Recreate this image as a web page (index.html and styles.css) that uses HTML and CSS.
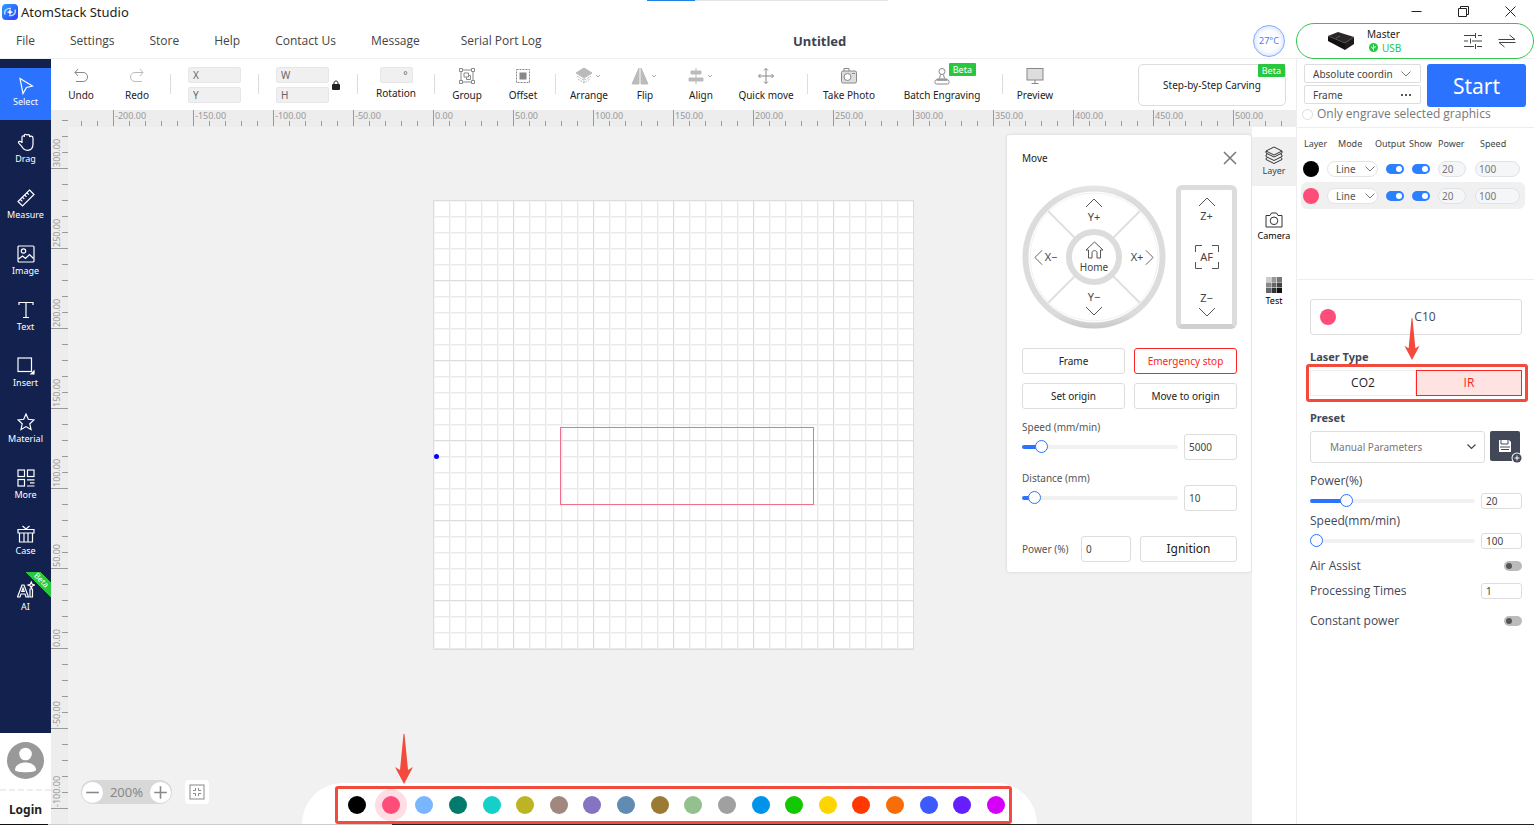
FILE: index.html
```html
<!DOCTYPE html>
<html lang="en">
<head>
  <meta charset="UTF-8" />
  <meta name="viewport" content="width=device-width, initial-scale=1.0"/>
  <title>AtomStack Studio</title>
  <link rel="stylesheet" href="styles.css">
</head>
<body>
  <div class="load-bar"></div>

  <header class="titlebar">
    <svg class="logo" viewBox="0 0 16 16">
      <defs><linearGradient id="logoFill" x1="0" y1="0" x2="1" y2="1"><stop offset="0" stop-color="#2fa0ff"/><stop offset="1" stop-color="#2a3cff"/></linearGradient></defs>
      <rect width="16" height="16" rx="4" fill="url(#logoFill)"/>
      <path d="M3 10.500C1.500 7 5 3.500 9 4.500M13 5.500C14.500 9 11 12.500 7 11.500" fill="none" stroke="#bfe0ff" stroke-width="1.300"/>
      <path d="M8 4.800L9 7.200L11.200 8L9 8.900L8 11.200L7 8.900L4.800 8L7 7.200Z" fill="#fff"/>
    </svg>
    <span class="app-name">AtomStack Studio</span>
    <div class="window-buttons">
      <button aria-label="Minimize"><svg width="11" height="11" viewBox="0 0 11 11"><path d="M0.500 5.500H10.500"/></svg></button>
      <button aria-label="Restore"><svg width="11" height="11" viewBox="0 0 11 11"><path d="M0.500 2.500H8.500V10.500H0.500ZM2.500 2.500V0.500H10.500V8.500H8.500"/></svg></button>
      <button aria-label="Close"><svg width="11" height="11" viewBox="0 0 11 11"><path d="M0.500 0.500L10.500 10.500M10.500 0.500L0.500 10.500"/></svg></button>
    </div>
  </header>

  <div class="menubar">
    <nav class="menu">
      <a href="#">File</a>
      <a href="#">Settings</a>
      <a href="#">Store</a>
      <a href="#">Help</a>
      <a href="#">Contact Us</a>
      <a href="#">Message</a>
      <a href="#" class="port-log">Serial Port Log</a>
    </nav>
    <h1 class="doc-title">Untitled</h1>
    <span class="temp">27°C</span>
    <div class="device">
      <svg class="device-pic" width="28" height="20" viewBox="0 0 28 20">
        <path d="M1 5L11 1L27 6L18 12Z" fill="#2b2727"/>
        <path d="M1 5L18 12V19L1 10Z" fill="#111"/>
        <path d="M18 12L27 6V13L18 19Z" fill="#1c1a1a"/>
        <path d="M1 5L18 12L27 6" fill="none" stroke="#5a5250" stroke-width="0.600"/>
        <path d="M9 7L13 5" stroke="#777" stroke-width="0.600"/>
      </svg>
      <div class="device-info">
        <span>Master</span>
        <span class="usb"><svg width="9" height="9" viewBox="0 0 9 9"><circle cx="4.500" cy="4.500" r="4.500" fill="#22c840"/><path d="M4.500 1.500V7.500M2.700 3.500V4.700L4.500 5.800M6.300 3V4.200L4.500 5.200" fill="none" stroke="#fff" stroke-width="0.800"/></svg>USB</span>
      </div>
      <button aria-label="Device settings"><svg width="18" height="16" viewBox="0 0 18 16"><path d="M0 2.500H11M14 2.500H18M11.500 0V5M0 8H4M8 8H18M6.500 5.500V10.500M0 13.500H10M13 13.500H18M11.500 11V16"/></svg></button>
      <button aria-label="Switch device"><svg width="18" height="14" viewBox="0 0 18 14"><path d="M0.500 5.500H17L11.500 1M17.500 8.500H1L6.500 13"/></svg></button>
    </div>
  </div>

  <div class="workspace">
    <aside class="sidebar">
      <div class="tools">
        <button class="side-tool active"><svg viewBox="0 0 18 18"><path d="M3 1.500L15.500 9L9.500 10.500L6 16.500Z"/></svg>Select</button>
        <button class="side-tool"><svg viewBox="0 0 18 18"><path d="M5 10V4C5 2.300 7.300 2.300 7.300 4V2.500C7.300 0.800 10 0.800 10 2.500C10 1.200 12.600 1.200 12.600 3V4C13 2.600 16 2.800 16 5V11C16 15 14 17.300 10.500 17.300C7 17.300 5.500 15 4.500 13L1.500 9.800C1 8.300 3 7.500 5 9.500"/></svg>Drag</button>
        <button class="side-tool"><svg viewBox="0 0 18 18"><path d="M12.500 1L17 5.500L5.500 17L1 12.500ZM3.500 10.500L5.300 12.300M5.500 8.300L7.300 10.100M7.700 6L9.500 7.800M10 3.800L11.800 5.600"/></svg>Measure</button>
        <button class="side-tool"><svg viewBox="0 0 18 18"><rect x="1" y="1" width="16" height="16" rx="1"/><circle cx="6.500" cy="6" r="2.200"/><path d="M1.500 14L5.500 11L8.500 13.500L12.500 9.500L16.500 13.500"/></svg>Image</button>
        <button class="side-tool"><svg viewBox="0 0 18 18"><path d="M2 4V1.500H16V4M9 1.500V16.500M6 16.500H12"/></svg>Text</button>
        <button class="side-tool"><svg viewBox="0 0 18 18"><rect x="1" y="1" width="13.500" height="13.500"/><path d="M17 14V17H14Z" fill="#fff"/></svg>Insert</button>
        <button class="side-tool"><svg viewBox="0 0 18 18"><path d="M9 1L11.300 6.300L17 6.900L12.800 10.800L14 16.500L9 13.600L4 16.500L5.200 10.800L1 6.900L6.700 6.300Z"/></svg>Material</button>
        <button class="side-tool"><svg viewBox="0 0 18 18"><rect x="1" y="1" width="6.500" height="6.500"/><rect x="10.500" y="1" width="6.500" height="6.500"/><rect x="1" y="10.500" width="6.500" height="6.500"/><path d="M10 10.800H17.500M13 13.800H17.500M10 17H17.500"/></svg>More</button>
        <button class="side-tool"><svg viewBox="0 0 18 18"><path d="M1 4.500H17V8H1ZM2.500 8V17H15.500V8M7 8V17M11 8V17M5.500 1L9 4L12.500 1"/></svg>Case</button>
        <button class="side-tool ai"><svg viewBox="0 0 18 18"><path d="M0.500 16L5 4H7L11.500 16H9L8 13H4L3 16ZM4.800 10.500H7.200L6 7ZM13 8H15.500V16H13ZM14.300 1L15.200 3.200L17.500 4L15.200 5L14.300 7L13.300 5L11 4L13.300 3.200Z"/></svg>AI<span class="ribbon"><span>Beta</span></span></button>
      </div>
      <div class="account">
        <svg width="37" height="37" viewBox="0 0 37 37"><circle cx="18.500" cy="18.500" r="18.500" fill="#999"/><circle cx="18.500" cy="12" r="6.300" fill="#fff"/><path d="M8 28C8 18 29 18 29 28C29 31 8 31 8 28Z" fill="#fff"/></svg>
        <a href="#">Login</a>
      </div>
    </aside>

    <main class="center">
      <div class="toolbar">
        <div class="group history">
          <button class="tool"><svg viewBox="0 0 18 18"><path d="M6 2L3 5.500L6 9M3 5.500H11C17 5.500 17 14.500 11 14.500H4"/></svg>Undo</button>
          <button class="tool faded"><svg viewBox="0 0 18 18"><path d="M12 2L15 5.500L12 9M15 5.500H7C1 5.500 1 14.500 7 14.500H14"/></svg>Redo</button>
        </div>
        <div class="group fields">
          <div class="field-stack"><input aria-label="X" value="X"><input aria-label="Y" value="Y"></div>
        </div>
        <div class="group fields">
          <div class="field-stack"><input aria-label="W" value="W"><input aria-label="H" value="H"></div>
          <svg class="lock" width="8" height="10" viewBox="0 0 8 10"><rect y="4" width="8" height="6" rx="1" fill="#222"/><path d="M2 4V3C2 0.300 6 0.300 6 3V4" fill="none" stroke="#222"/></svg>
        </div>
        <div class="group fields">
          <label class="rotation"><input value="°">Rotation</label>
        </div>
        <div class="group">
          <button class="tool"><svg viewBox="0 0 18 18"><path d="M4 3H14M4 15H14M3 4V14M15 4V14M1.500 1.500H4.500V4.500H1.500ZM13.500 1.500H16.500V4.500H13.500ZM1.500 13.500H4.500V16.500H1.500ZM13.500 13.500H16.500V16.500H13.500ZM6 6H10.500V10H6ZM8.500 10V12.500H12.500V8.500H10.500"/></svg>Group</button>
          <button class="tool"><svg viewBox="0 0 18 18"><rect x="2.500" y="2.500" width="13" height="13" stroke-dasharray="2 1"/><rect x="6" y="6" width="6" height="6" fill="#888"/></svg>Offset</button>
        </div>
        <div class="group arrange">
          <button class="tool drop"><svg viewBox="0 0 28 18"><path d="M9 1L17 6L9 11L1 6Z" fill="#bbb" stroke="#bbb"/><path d="M2 9L9 13.500L16 9M3 12L9 16L15 12M9 11V17" stroke="#bbb" stroke-dasharray="2 1"/><path d="M21 8L23 10L25 8" stroke="#aaa"/></svg>Arrange</button>
          <button class="tool drop"><svg viewBox="0 0 28 18"><path d="M8 1V17H1ZM10 1V17H17Z" fill="#bbb" stroke="#bbb"/><path d="M21 8L23 10L25 8" stroke="#aaa"/></svg>Flip</button>
          <button class="tool drop"><svg viewBox="0 0 28 18"><path d="M4 4H14V7H4ZM2 11H16V14H2Z" fill="#bbb" stroke="#bbb"/><path d="M9 1V17" stroke="#bbb"/><path d="M21 8L23 10L25 8" stroke="#aaa"/></svg>Align</button>
          <button class="tool wide"><svg viewBox="0 0 18 18"><path d="M9 1.500V16.500M1.500 9H16.500M7 3.500L9 1.500L11 3.500M7 14.500L9 16.500L11 14.500M3.500 7L1.500 9L3.500 11M14.500 7L16.500 9L14.500 11"/></svg>Quick move</button>
        </div>
        <div class="group">
          <button class="tool wide"><svg viewBox="0 0 18 18"><rect x="1.500" y="4" width="15" height="12" rx="1.500" fill="#ddd"/><path d="M4 4V1.500H9V4M12 6.500H15"/><circle cx="7.500" cy="10" r="3.500" fill="#fff"/></svg>Take Photo</button>
          <button class="tool batch"><svg viewBox="0 0 18 18"><circle cx="9" cy="4.500" r="3"/><path d="M7.500 7.500L6.500 11.500M10.500 7.500L11.500 11.500M4 12H14V13H4Z"/><rect x="2" y="13" width="14" height="4" rx="1.500"/></svg>Batch Engraving<span class="beta">Beta</span></button>
        </div>
        <div class="group last">
          <button class="tool"><svg viewBox="0 0 18 18"><rect x="1" y="1.500" width="16" height="11.500" fill="#ddd"/><path d="M9 13V16.500M5.500 16.500H12.500"/></svg>Preview</button>
        </div>
        <button class="step">Step-by-Step Carving<span class="beta">Beta</span></button>
      </div>

      <div class="board">
        <div class="ruler-x" id="rulerX"></div>
        <div class="ruler-y" id="rulerY"></div>

        <div class="stage">
          <div class="bed">
            <div class="shape"></div>
            <div class="laser-dot"></div>
          </div>

          <div class="zoom-bar">
            <div class="zoom">
              <button aria-label="Zoom out"><svg viewBox="0 0 20 20"><path d="M4 10H16"/></svg></button>
              <span>200%</span>
              <button aria-label="Zoom in"><svg viewBox="0 0 20 20"><path d="M4 10H16M10 4V16"/></svg></button>
            </div>
            <button class="fit" aria-label="Fit to screen"><svg viewBox="0 0 16 16"><rect x="1" y="1" width="14" height="14"/><path d="M4 6.500H6.500V4M12 6.500H9.500V4M4 9.500H6.500V12M12 9.500H9.500V12"/></svg></button>
          </div>

          <section class="move-panel">
            <div class="move-head">
              <h2>Move</h2>
              <button aria-label="Close panel"><svg width="14" height="14" viewBox="0 0 14 14"><path d="M1 1L13 13M13 1L1 13" stroke="#777" stroke-width="1.500"/></svg></button>
            </div>
            <div class="jog-row">
              <div class="jog">
                <svg class="jog-bg" viewBox="0 0 144 144">
                  <defs><linearGradient id="rim" x1="0" y1="0" x2="0" y2="1"><stop offset="0" stop-color="#e6e6e6"/><stop offset="0.100" stop-color="#dcdcdc"/><stop offset="0.900" stop-color="#dcdcdc"/><stop offset="1" stop-color="#c8c8c8"/></linearGradient></defs>
                  <circle cx="72" cy="72" r="71.500" fill="url(#rim)"/>
                  <circle cx="72" cy="72" r="65.500" fill="#fff"/>
                  <circle cx="72" cy="72" r="64" fill="none" stroke="#f1f1f1"/>
                  <path d="M26 26L118 118M118 26L26 118" stroke="#e0e0e0" stroke-width="2"/>
                  <circle cx="72" cy="72" r="25" fill="#fff" stroke="#dcdcdc" stroke-width="6"/>
                </svg>
                <button class="y-plus"><svg class="chev" viewBox="0 0 18 10"><path d="M1 9L9 1L17 9"/></svg>Y+</button>
                <button class="x-minus"><svg class="chev-side" viewBox="0 0 10 18"><path d="M9 1L1 9L9 17"/></svg>X−</button>
                <button class="home"><svg width="19" height="18" viewBox="0 0 19 18"><path d="M1 9L9.500 1L18 9H15.500V17H12V11.500C12 9 7 9 7 11.500V17H3.500V9Z"/></svg>Home</button>
                <button class="x-plus">X+<svg class="chev-side" viewBox="0 0 10 18"><path d="M1 1L9 9L1 17"/></svg></button>
                <button class="y-minus">Y−<svg class="chev" viewBox="0 0 18 10"><path d="M1 1L9 9L17 1"/></svg></button>
              </div>
              <div class="z-pad">
                <button><svg class="chev" viewBox="0 0 18 10"><path d="M1 9L9 1L17 9"/></svg>Z+</button>
                <button class="af">AF<svg viewBox="0 0 24 24"><path d="M0.500 7V0.500H7M17 0.500H23.500V7M23.500 17V23.500H17M7 23.500H0.500V17"/></svg></button>
                <button>Z−<svg class="chev" viewBox="0 0 18 10"><path d="M1 1L9 9L17 1"/></svg></button>
              </div>
            </div>
            <div class="move-buttons">
              <button class="btn">Frame</button>
              <button class="btn danger">Emergency stop</button>
              <button class="btn">Set origin</button>
              <button class="btn">Move to origin</button>
            </div>
            <div class="move-slider">
              <label for="moveSpeed">Speed (mm/min)</label>
              <input type="range" id="moveSpeed" value="9" style="--fill: 13%">
              <input class="box" aria-label="Speed value" value="5000">
            </div>
            <div class="move-slider">
              <label for="moveDistance">Distance (mm)</label>
              <input type="range" id="moveDistance" value="4" style="--fill: 8%">
              <input class="box" aria-label="Distance value" value="10">
            </div>
            <div class="ignite">
              <label for="movePower">Power (%)</label>
              <input class="box" id="movePower" value="0">
              <button class="btn big">Ignition</button>
            </div>
          </section>

          <div class="palette">
            <svg class="arrow" width="18" height="50" viewBox="0 0 18 50"><path d="M8.500 0H9.500L13 36L18 33L9 50L0 33L5 36Z" fill="#f24a3d"/></svg>
            <div class="swatches" id="swatches"></div>
          </div>
        </div>

        <nav class="tabs">
          <button class="tab active"><svg viewBox="0 0 18 18"><path d="M9 1L17 5L9 9L1 5ZM1 5V7L9 11L17 7V5M2.500 8L1 9V10.500L9 14.500L17 10.500V9L15.500 8M2.500 11.500L1 12.500V13.500L9 17.500L17 13.500V12.500L15.500 11.500"/></svg>Layer</button>
          <button class="tab"><svg viewBox="0 0 18 18"><path d="M1 4.500H5L6.500 2H11.500L13 4.500H17V16H1Z"/><circle cx="9" cy="9.800" r="3.800"/></svg>Camera</button>
          <button class="tab"><svg viewBox="0 0 18 18" class="test-icon"><path fill="#ccc" d="M1 1H6V6H1Z"/><path fill="#999" d="M6.500 1H11.500V6H6.500Z"/><path fill="#777" d="M12 1H17V6H12Z"/><path fill="#888" d="M1 6.500H6V11.500H1Z"/><path fill="#666" d="M6.500 6.500H11.500V11.500H6.500Z"/><path fill="#444" d="M12 6.500H17V11.500H12Z"/><path fill="#666" d="M1 12H6V17H1Z"/><path fill="#333" d="M6.500 12H11.500V17H6.500Z"/><path fill="#111" d="M12 12H17V17H12Z"/></svg>Test</button>
        </nav>
      </div>
    </main>

    <aside class="panel">
      <section class="run">
        <div class="run-left">
          <div class="select">
            <select aria-label="Coordinates"><option>Absolute coordin</option></select>
            <svg width="10" height="6" viewBox="0 0 10 6"><path d="M0.500 0.500L5 5L9.500 0.500"/></svg>
          </div>
          <button class="frame-btn">Frame<svg width="10" height="2" viewBox="0 0 10 2"><path d="M0 0H2V2H0ZM4 0H6V2H4ZM8 0H10V2H8Z" fill="#555"/></svg></button>
        </div>
        <button class="start">Start</button>
        <label class="only"><input type="radio">Only engrave selected graphics</label>
      </section>

      <section class="layers">
        <table>
          <thead>
            <tr><th class="c-layer">Layer</th><th class="c-mode">Mode</th><th class="c-output">Output</th><th class="c-show">Show</th><th class="c-power">Power</th><th class="c-speed">Speed</th></tr>
          </thead>
          <tbody>
            <tr>
              <td><span class="dot black"></span></td>
              <td><div class="select pill"><select aria-label="Mode, layer 1"><option>Line</option></select><svg width="10" height="6" viewBox="0 0 10 6"><path d="M0.500 0.500L5 5L9.500 0.500"/></svg></div></td>
              <td class="c-output"><input type="checkbox" class="switch" aria-label="Output, layer 1" checked></td>
              <td class="c-show"><input type="checkbox" class="switch" aria-label="Show, layer 1" checked></td>
              <td><input class="num" aria-label="Power, layer 1" value="20"></td>
              <td><input class="num long" aria-label="Speed, layer 1" value="100"></td>
            </tr>
            <tr class="current">
              <td><span class="dot pink"></span></td>
              <td><div class="select pill"><select aria-label="Mode, layer 2"><option>Line</option></select><svg width="10" height="6" viewBox="0 0 10 6"><path d="M0.500 0.500L5 5L9.500 0.500"/></svg></div></td>
              <td class="c-output"><input type="checkbox" class="switch" aria-label="Output, layer 2" checked></td>
              <td class="c-show"><input type="checkbox" class="switch" aria-label="Show, layer 2" checked></td>
              <td><input class="num" aria-label="Power, layer 2" value="20"></td>
              <td><input class="num long" aria-label="Speed, layer 2" value="100"></td>
            </tr>
          </tbody>
        </table>
      </section>

      <section class="params">
        <button class="layer-name"><span class="dot pink"></span><span>C10</span></button>
        <div class="laser">
          <h3>Laser Type</h3>
          <svg class="arrow" width="16" height="42" viewBox="0 0 18 50"><path d="M8.500 0H9.500L13 36L18 33L9 50L0 33L5 36Z" fill="#f24a3d"/></svg>
          <div class="laser-types">
            <button>CO2</button>
            <button class="on">IR</button>
          </div>
        </div>
        <h3>Preset</h3>
        <div class="preset">
          <div class="select">
            <select aria-label="Preset"><option>Manual Parameters</option></select>
            <svg width="9" height="6" viewBox="0 0 9 6"><path d="M0.500 0.500L4.500 4.500L8.500 0.500" stroke="#444" stroke-width="1.200"/></svg>
          </div>
          <button class="save" aria-label="Save preset">
            <svg width="32" height="32" viewBox="0 0 32 32"><rect width="30" height="30" rx="2" fill="#434859"/><path d="M9 9H19L21 11V21H9Z" fill="#fff"/><path d="M11 9V13H18V9M10 16H20M11 18.500H19" fill="none" stroke="#434859"/><circle cx="27" cy="27" r="5.500" fill="#fff"/><circle cx="27" cy="27" r="4.500" fill="#434859"/><path d="M27 24.500V29.500M24.500 27H29.500" stroke="#fff"/></svg>
          </button>
        </div>
        <div class="param">
          <label for="power">Power(%)</label>
          <input type="range" id="power" value="20" style="--fill: 22%">
          <input class="box" aria-label="Power value" value="20">
        </div>
        <div class="param">
          <label for="speed">Speed(mm/min)</label>
          <input type="range" id="speed" value="0" style="--fill: 0%">
          <input class="box" aria-label="Speed value" value="100">
        </div>
        <div class="line"><label for="air">Air Assist</label><input type="checkbox" id="air" class="switch off"></div>
        <div class="line"><label for="times">Processing Times</label><input id="times" class="box" value="1"></div>
        <div class="line last"><label for="constant">Constant power</label><input type="checkbox" id="constant" class="switch off"></div>
      </section>
    </aside>
  </div>
  <div class="bottom-edge"></div>

  <script>
    const rulerX = document.getElementById("rulerX");
    const rulerY = document.getElementById("rulerY");
    const swatches = document.getElementById("swatches");

    const colors = [
      "#000000", "#ff4d79", "#7ab5ff", "#047a6c", "#14d0c8", "#bcb325", "#a1887f",
      "#8673c1", "#5f8cb0", "#9b7b33", "#93c08d", "#a0a0a0", "#0093ec", "#14c800",
      "#ffd500", "#ff3800", "#f76e08", "#3d5afe", "#651fff", "#d500f9"
    ];

    function addMarks(ruler, from, to, step) {
      for (let v = from; step > 0 ? v <= to : v >= to; v += step) {
        const mark = document.createElement("span");
        mark.className = "mark";
        mark.textContent = v.toFixed(2);
        ruler.appendChild(mark);
      }
    }

    addMarks(rulerX, -200, 500, 50);
    addMarks(rulerY, 300, -100, -50);

    colors.forEach((color, i) => {
      const swatch = document.createElement("button");
      swatch.className = i === 1 ? "swatch picked" : "swatch";
      swatch.style.background = color;
      swatch.setAttribute("aria-label", "Color " + (i + 1));
      swatches.appendChild(swatch);
    });
  </script>
</body>
</html>
```
FILE: styles.css
```css
* {
  box-sizing: border-box;
}

body {
  margin: 0;
  height: 100vh;
  display: flex;
  flex-direction: column;
  overflow: hidden;
  background: #fff;
  color: #222;
  font-family: "Noto Sans", "Open Sans", sans-serif;
  font-size: 10px;
  line-height: 14px;
}

button, input, select {
  font: inherit;
  color: inherit;
  margin: 0;
  padding: 0;
  border: none;
  background: none;
}

a {
  color: inherit;
  text-decoration: none;
}

h1, h2, h3 {
  margin: 0;
}

svg {
  flex-shrink: 0;
  fill: none;
  stroke-width: 1;
}

.load-bar {
  position: absolute;
  top: 0;
  left: 647px;
  width: 241px;
  height: 1px;
  background: linear-gradient(to right, #1c82e0 48px, #e4e4e4 48px);
}

/* title bar */
.titlebar {
  height: 23px;
  display: flex;
  align-items: center;
  padding: 0 18px 0 2px;
}

.logo {
  width: 16px;
  height: 16px;
}

.app-name {
  margin-left: 3px;
  font-size: 13px;
}

.window-buttons {
  margin-left: auto;
  display: flex;
  gap: 36px;
}

.window-buttons button {
  display: flex;
}

.window-buttons svg {
  stroke: #222;
}

/* menu bar */
.menubar {
  height: 36px;
  display: flex;
  align-items: center;
  border-bottom: 1px solid #f0f0f0;
}

.menu {
  flex: 0 0 793px;
  display: flex;
  gap: 35px;
  padding-left: 16px;
  font-family: "Open Sans", sans-serif;
  font-size: 12px;
  line-height: 16px;
  color: #444;
  white-space: nowrap;
}

.port-log {
  margin-left: 6px;
}

.doc-title {
  font-size: 13px;
  color: #3c4252;
}

.temp {
  margin-left: auto;
  margin-right: 11px;
  width: 32px;
  height: 32px;
  border: 1px solid #7ea8ff;
  border-radius: 50%;
  box-shadow: inset 0 0 6px #c4d6ff;
  color: #3c7bff;
  font-size: 9px;
  line-height: 30px;
  text-align: center;
}

.device {
  width: 238px;
  height: 36px;
  display: flex;
  align-items: center;
  padding: 0 17px 0 30px;
  border: 1px solid #2fc74c;
  border-radius: 18px;
}

.device-info {
  display: flex;
  flex-direction: column;
  margin: 0 auto 0 12px;
}

.device .usb {
  display: flex;
  align-items: center;
  gap: 4px;
  padding-left: 2px;
  color: #22c840;
}

.device button {
  display: flex;
  margin-left: 16px;
}

.device button svg {
  stroke: #444;
}

.workspace {
  flex: 1;
  min-height: 0;
  display: flex;
}

/* left sidebar */
.sidebar {
  width: 51px;
  display: flex;
  flex-direction: column;
  background: #12214d;
}

.tools {
  flex: 1;
  display: flex;
  flex-direction: column;
  gap: 4px;
  padding-top: 9px;
}

.side-tool {
  position: relative;
  height: 52px;
  display: flex;
  flex-direction: column;
  align-items: center;
  padding-top: 9px;
  gap: 1px;
  color: #fff;
  font-size: 9px;
}

.side-tool.active {
  background: #2b73ff;
  gap: 0;
}

.side-tool > svg {
  width: 18px;
  height: 18px;
  stroke: #fff;
  stroke-width: 1.2;
}

.ribbon {
  position: absolute;
  top: 0;
  right: 0;
  width: 25px;
  height: 25px;
  display: grid;
  place-items: center;
  padding: 0 0 9px 7px;
  background: linear-gradient(to top right, transparent 50%, #27c840 50% 80%, transparent 80%);
}

.ribbon span {
  line-height: 8px;
  font-size: 8px;
  transform: rotate(45deg);
}

.account {
  height: 91px;
  display: flex;
  flex-direction: column;
  align-items: center;
  padding-top: 9px;
  background: #fff;
}

.account a {
  width: 51px;
  margin-top: 10px;
  padding-top: 12px;
  border-top: 2px dashed #eee;
  font-size: 12px;
  font-weight: bold;
  text-align: center;
}

/* toolbar */
.center {
  flex: 1;
  min-width: 0;
  display: flex;
  flex-direction: column;
}

.toolbar {
  height: 51px;
  display: flex;
  align-items: center;
  padding-right: 10px;
}

.group {
  height: 51px;
  display: flex;
  align-items: center;
  padding: 0 4px;
  border-right: 1px solid transparent;
  border-image: linear-gradient(transparent 15px, #ddd 15px, #ddd 35px, transparent 35px) 1;
}

.group.history {
  padding: 0 5px 0 2px;
}

.group.arrange {
  padding: 0 4px 0 5px;
}

.group.last {
  border: none;
}

.group.fields {
  padding: 0 17px;
  gap: 3px;
}

.field-stack {
  display: flex;
  flex-direction: column;
  gap: 4px;
}

.toolbar input {
  width: 53px;
  height: 16px;
  padding: 0 4px;
  background: #f0f0f0;
  border: 1px solid #e6e6e6;
  border-radius: 2px;
  color: #666;
}

.toolbar .rotation {
  width: 42px;
  display: flex;
  flex-direction: column;
  align-items: center;
  gap: 3px;
  padding-bottom: 2px;
}

.toolbar .rotation input {
  width: 33px;
  text-align: right;
}

.tool {
  position: relative;
  width: 56px;
  display: flex;
  flex-direction: column;
  align-items: center;
  gap: 3px;
  padding-bottom: 1px;
  white-space: nowrap;
}

.tool.wide {
  width: 74px;
}

.tool.batch {
  width: 112px;
}

.tool svg {
  width: 18px;
  height: 18px;
  stroke: #888;
}

.tool.drop svg {
  width: 28px;
}

.tool.faded svg {
  stroke: #bbb;
}

.beta {
  position: absolute;
  top: -4px;
  right: 22px;
  padding: 0 4px;
  background: #27c840;
  border-radius: 1px;
  color: #fff;
  font-size: 9px;
  line-height: 13px;
}

.step {
  position: relative;
  width: 148px;
  height: 42px;
  margin-left: auto;
  border: 1px solid #ddd;
  border-radius: 5px;
}

.step .beta {
  top: -1px;
  right: 0;
}

/* rulers and drawing area */
.board {
  flex: 1;
  min-height: 0;
  display: grid;
  grid-template-columns: 17px 1fr 44px;
  grid-template-rows: 17px 1fr;
  background: #f1f1f1;
}

.ruler-x {
  grid-area: 1 / 2 / 2 / 4;
  display: flex;
  overflow: hidden;
  padding-left: 45px;
  background: repeating-linear-gradient(to right, transparent 0 13px, #999 13px 14px, transparent 14px 16px) 0 11px / 100% 5px no-repeat #ededed;
}

.ruler-x .mark {
  flex: 0 0 80px;
  height: 16px;
  padding-left: 1px;
  border-left: 1px solid #999;
  font-size: 9px;
  line-height: 11px;
  color: #999;
}

.ruler-y {
  grid-area: 1 / 1 / 3 / 2;
  display: flex;
  flex-direction: column;
  overflow: hidden;
  background: repeating-linear-gradient(to bottom, transparent 0 10px, #999 10px 11px, transparent 11px 16px) 11px 0 / 6px 100% no-repeat #ededed;
}

.ruler-y .mark {
  flex: 0 0 80px;
  padding-top: 1px;
  border-top: 1px solid #999;
  font-size: 9px;
  line-height: 11px;
  color: #999;
  writing-mode: vertical-rl;
  transform: rotate(180deg);
}

.ruler-y .mark:first-child {
  flex-basis: 59px;
}

.stage {
  position: relative;
  overflow: hidden;
}

.bed {
  position: absolute;
  left: 365px;
  top: 73px;
  width: 481px;
  height: 450px;
  border: 1px solid #dcdcdc;
  background:
    repeating-linear-gradient(to right, transparent 0 79px, #dcdcdc 79px 80px),
    repeating-linear-gradient(to bottom, transparent 0 79px, #dcdcdc 79px 80px),
    repeating-linear-gradient(to right, #f6f6f6 0 1px, transparent 1px 15px, #e9e9e9 15px 16px),
    repeating-linear-gradient(to bottom, #f6f6f6 0 1px, transparent 1px 15px, #e9e9e9 15px 16px),
    #fff;
}

.shape {
  position: absolute;
  left: 126px;
  top: 226px;
  width: 254px;
  height: 78px;
  border: 1px solid #ef6f8d;
}

.laser-dot {
  position: absolute;
  left: 0;
  top: 253px;
  width: 5px;
  height: 5px;
  border-radius: 50%;
  background: #00f;
}

.zoom-bar {
  position: absolute;
  left: 13px;
  bottom: 20px;
  display: flex;
  align-items: center;
  gap: 13px;
}

.zoom {
  width: 91px;
  height: 24px;
  display: flex;
  align-items: center;
  justify-content: space-between;
  padding: 1px;
  border-radius: 12px;
  background: #d8d8d8;
  color: #888;
  font-size: 13px;
}

.zoom button {
  display: flex;
  width: 21px;
  height: 21px;
  border-radius: 50%;
  background: #fff;
}

.zoom svg, .fit svg {
  stroke: #888;
}

.zoom svg {
  stroke-width: 1.5;
}

.fit {
  width: 24px;
  height: 24px;
  padding: 4px;
  border-radius: 4px;
  background: #fff;
}

.fit svg {
  display: block;
}

/* move panel */
.move-panel {
  position: absolute;
  top: 8px;
  right: 1px;
  width: 244px;
  padding: 15px 14px 10px 15px;
  border-radius: 3px;
  background: #fff;
  box-shadow: 0 0 3px #ccc;
}

.move-head {
  height: 16px;
  display: flex;
  align-items: center;
  justify-content: space-between;
}

.move-head h2 {
  font-size: 10px;
  font-weight: normal;
}

.move-head button {
  display: flex;
}

.jog-row {
  display: flex;
  justify-content: space-between;
  margin-top: 19px;
  color: #444;
}

.jog-row button svg {
  stroke: #555;
}

.jog {
  position: relative;
  width: 144px;
  height: 144px;
  display: grid;
  grid-template-columns: 1fr 50px 1fr;
  grid-template-rows: 1fr 50px 1fr;
}

.jog-bg {
  position: absolute;
  inset: 0;
}

.jog button, .z-pad button {
  position: relative;
  display: flex;
  flex-direction: column;
  align-items: center;
  justify-content: center;
  gap: 2px;
  font-size: 11px;
}

.chev {
  width: 18px;
  height: 10px;
}

.chev-side {
  width: 9px;
  height: 17px;
}

.jog .y-plus {
  grid-area: 1 / 2;
  padding-top: 4px;
}

.jog .x-minus {
  grid-area: 2 / 1;
  flex-direction: row;
}

.jog .home {
  grid-area: 2 / 2;
  font-size: 10px;
  line-height: 13px;
}

.jog .x-plus {
  grid-area: 2 / 3;
  flex-direction: row;
}

.jog .y-minus {
  grid-area: 3 / 2;
  padding-bottom: 6px;
}

.z-pad {
  width: 61px;
  height: 144px;
  display: flex;
  flex-direction: column;
  justify-content: space-between;
  align-items: center;
  padding: 7px 0;
  border: 5px solid #dcdcdc;
  border-bottom-color: #d0d0d0;
  border-radius: 6px;
}

.z-pad .af {
  width: 24px;
  height: 24px;
}

.af svg {
  position: absolute;
  inset: 0;
}

.btn {
  height: 26px;
  border: 1px solid #ddd;
  border-radius: 3px;
  color: #222;
}

.btn.danger {
  border-color: #f22;
  color: #f22;
}

.btn.big {
  width: 97px;
  margin-left: 9px;
  font-size: 12px;
}

.move-buttons {
  display: grid;
  grid-template-columns: 1fr 1fr;
  gap: 9px;
  margin: 19px 0 11px;
}

.box {
  width: 53px;
  height: 26px;
  padding: 0 4px;
  border: 1px solid #ddd;
  border-radius: 3px;
  color: #444;
}

.move-slider {
  display: grid;
  grid-template-columns: 1fr 53px;
  column-gap: 6px;
  margin-bottom: 11px;
  color: #555;
}

.move-slider label {
  grid-column: 1 / 3;
}

.move-slider .box, .move-slider input {
  align-self: center;
}

.ignite {
  display: flex;
  align-items: center;
  margin-top: 25px;
  color: #555;
}

.ignite .box {
  width: 50px;
  margin-left: auto;
}

input[type="range"] {
  appearance: none;
  min-width: 0;
  height: 14px;
}

input[type="range"]::-webkit-slider-runnable-track {
  height: 4px;
  border-radius: 2px;
  background: linear-gradient(to right, #2b73ff var(--fill), #f1f1f1 var(--fill));
}

input[type="range"]::-webkit-slider-thumb {
  appearance: none;
  width: 13px;
  height: 13px;
  margin-top: -5px;
  border: 1px solid #2b73ff;
  border-radius: 50%;
  background: #fff;
}

/* palette */
.palette {
  position: absolute;
  left: 234px;
  right: 215px;
  bottom: 0;
  height: 41px;
  padding: 3px 25px 1px 33px;
  border-radius: 42px 42px 0 0;
  background: #fff;
}

.palette .arrow {
  position: absolute;
  left: 93px;
  top: -49px;
}

.swatches {
  height: 38px;
  display: flex;
  align-items: center;
  justify-content: space-between;
  padding: 0 4px 0 10px;
  border: 3px solid #f24a3d;
  border-radius: 3px;
}

.swatch {
  width: 18px;
  height: 18px;
  border-radius: 50%;
}

.swatch.picked {
  box-shadow: 0 0 0 7px #ffdde5;
}

/* tabs */
.tabs {
  display: flex;
  flex-direction: column;
  gap: 16px;
  padding-top: 10px;
  background: #fff;
}

.tab {
  height: 49px;
  display: flex;
  flex-direction: column;
  align-items: center;
  justify-content: center;
  font-size: 9px;
  color: #000;
}

.tab.active {
  background: #f0f0f0;
  color: #444;
}

.tab svg {
  width: 18px;
  height: 18px;
  stroke: #333;
}

.tab .test-icon {
  stroke: none;
}

/* right panel */
.panel {
  width: 238px;
  border-left: 1px solid #eee;
}

.select {
  display: grid;
  align-items: center;
}

.select select {
  grid-area: 1 / 1;
  appearance: none;
  min-width: 0;
  width: 100%;
}

.select svg {
  grid-area: 1 / 1;
  justify-self: end;
  stroke: #777;
  pointer-events: none;
}

.run {
  display: grid;
  grid-template-columns: 1fr 99px;
  grid-template-rows: 43px 14px;
  column-gap: 6px;
  height: 69px;
  padding: 5px 8px 0 7px;
  border-bottom: 1px solid #eee;
}

.run-left {
  display: flex;
  flex-direction: column;
  gap: 2px;
}

.run .select, .frame-btn {
  height: 19px;
  padding: 0 9px 0 8px;
  border: 1px solid #ddd;
  border-radius: 2px;
  color: #444;
}

.frame-btn {
  display: flex;
  align-items: center;
  justify-content: space-between;
}

.start {
  border-radius: 3px;
  background: #2b73ff;
  color: #fff;
  font-size: 21px;
}

.only {
  grid-column: 1 / 3;
  display: flex;
  align-items: center;
  gap: 4px;
  margin-left: -2px;
  font-family: "Open Sans", sans-serif;
  font-size: 12px;
  color: #777;
}

.only input {
  appearance: none;
  width: 11px;
  height: 11px;
  border: 1px solid #ddd;
  border-radius: 50%;
}

.layers {
  height: 152px;
  padding: 5px 9px 0 4px;
  border-bottom: 1px solid #eee;
}

.layers table {
  width: 100%;
  table-layout: fixed;
  border-collapse: collapse;
}

.layers th {
  height: 22px;
  padding: 0;
  font-size: 9px;
  font-weight: normal;
  text-align: left;
  color: #444;
}

.layers td {
  height: 27px;
  padding: 0;
}

.layers .c-layer {
  width: 26px;
  padding-left: 3px;
}

.layers .c-mode {
  width: 48px;
  padding-left: 11px;
}

.layers .c-output {
  width: 32px;
}

.layers .c-show {
  width: 28px;
  padding-left: 2px;
}

.layers .c-power {
  width: 37px;
  padding-left: 3px;
}

.layers .c-speed {
  padding-left: 8px;
}

.layers td.c-output {
  padding-left: 11px;
}

.layers td.c-show {
  padding-left: 5px;
}

.current {
  background: #f0f0f0;
  clip-path: inset(0 round 6px);
}

.dot {
  display: block;
  width: 16px;
  height: 16px;
  margin-left: 2px;
  border-radius: 50%;
}

.dot.black {
  background: #000;
}

.dot.pink {
  background: #ff4d79;
}

.select.pill {
  width: 51px;
  height: 16px;
  padding: 0 2px 0 8px;
  border: 1px solid #e4e4e4;
  border-radius: 8px;
  background: #fff;
  color: #555;
}

.switch {
  appearance: none;
  display: block;
  width: 18px;
  height: 10px;
  padding: 2px;
  border-radius: 5px;
  background: #2b80ff;
}

.switch::before {
  content: "";
  display: block;
  width: 6px;
  height: 6px;
  margin-left: 8px;
  border-radius: 50%;
  background: #fff;
}

.switch.off {
  background: #bbb;
}

.switch.off::before {
  margin-left: 0;
  background: #555;
}

.num {
  display: block;
  width: 28px;
  height: 16px;
  margin-left: 3px;
  padding: 0 3px;
  border: 1px solid #e0e3e6;
  border-radius: 8px;
  background: #f5f6f8;
  color: #777;
}

.num.long {
  width: 45px;
}

.params {
  padding: 19px 12px 0 13px;
  font-family: "Open Sans", sans-serif;
  font-size: 12px;
  color: #434859;
}

.params h3 {
  font-family: "Noto Sans", sans-serif;
  font-size: 11px;
}

.layer-name {
  width: 100%;
  height: 36px;
  display: flex;
  align-items: center;
  border: 1px solid #ddd;
  border-radius: 3px;
}

.layer-name .dot {
  margin-left: 9px;
}

.layer-name span:last-child {
  flex: 1;
  padding-right: 7px;
}

.laser {
  position: relative;
  margin-top: 15px;
}

.laser .arrow {
  position: absolute;
  left: 94px;
  top: -32px;
}

.laser-types {
  display: flex;
  margin: 0 -6px 9px -4px;
  padding: 3px;
  padding-left: 1px;
  border: 3px solid #f24a3d;
  border-radius: 3px;
}

.laser-types button {
  flex: 1;
  height: 26px;
  border: 1px solid #eee;
  color: #222;
}

.laser-types .on {
  border-color: #f22;
  background: #ffe3e3;
  color: #f22;
}

.preset {
  display: flex;
  gap: 5px;
  margin: 6px 0 11px;
}

.preset .select {
  flex: 1;
  height: 32px;
  padding: 0 8px 0 19px;
  border: 1px solid #ddd;
  border-radius: 3px;
  font-family: "Noto Sans", sans-serif;
  font-size: 10px;
  color: #777;
}

.preset .save {
  width: 32px;
  height: 32px;
}

.param {
  display: grid;
  grid-template-columns: 1fr 41px;
  column-gap: 6px;
  row-gap: 5px;
  align-items: center;
  margin-bottom: 5px;
}

.param label {
  grid-column: 1 / 3;
}

.params .box {
  width: 41px;
  height: 16px;
  font-family: "Noto Sans", sans-serif;
  font-size: 10px;
}

.line {
  display: flex;
  align-items: center;
  justify-content: space-between;
  height: 16px;
  margin-top: 9px;
}

.line.last {
  margin-top: 14px;
}

.bottom-edge {
  height: 1px;
  background: linear-gradient(to right, #111 48px, #ccc 48px, #ccc 392px, #222 392px);
}
```
